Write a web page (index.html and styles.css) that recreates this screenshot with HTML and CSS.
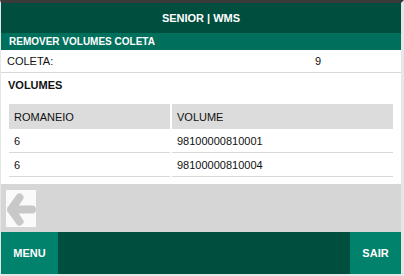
FILE: index.html
```html
<!DOCTYPE html>
<html lang="pt">
    <head>
        <meta charset="UTF-8" />
        <meta name="viewport" content="width=device-width, initial-scale=1.0" />
        <title>Senior | WMS</title>
        <link rel="stylesheet" href="styles.css">
    </head>
    <body>
        <div class="page">
            <!-- cabeçalho -->
            <div class="header">SENIOR | WMS</div>
            <div class="subheader">REMOVER VOLUMES COLETA</div>

            <div class="content">
                <div class="field">
                    <span class="field-label">COLETA:</span>
                    <span class="field-value">9</span>
                </div>

                <div class="volumes">
                    <div class="volumes-title">VOLUMES</div>
                    <table class="grid">
                        <thead>
                            <tr>
                                <th class="col-romaneio">ROMANEIO</th>
                                <th>VOLUME</th>
                            </tr>
                        </thead>
                        <tbody>
                            <tr>
                                <td>6</td>
                                <td>98100000810001</td>
                            </tr>
                            <tr>
                                <td>6</td>
                                <td>98100000810004</td>
                            </tr>
                        </tbody>
                    </table>
                </div>
            </div>

            <!-- barra de ações -->
            <div class="actions">
                <button class="back" title="Voltar">
                    <svg width="30" height="37" viewBox="0 0 30 37">
                        <path d="M13.5 7.5 L5 19.5 L13.5 31.5 M5 19.5 H26" fill="none" stroke="#c8c8c8" stroke-width="8" stroke-linecap="round" stroke-linejoin="round" />
                    </svg>
                </button>
            </div>

            <!-- rodapé -->
            <div class="footer">
                <button class="footer-btn menu">MENU</button>
                <button class="footer-btn sair">SAIR</button>
            </div>
        </div>
    </body>
</html>
```

FILE: styles.css
```css
* {
    box-sizing: border-box;
}

body {
    margin: 0;
    padding: 0;
    background-color: #e6e6e6;
    font-family: "Liberation Sans", Arial, sans-serif;
    color: #111;
}

.page {
    display: flex;
    flex-direction: column;
    height: 276px;
    border-top: 3px solid #3a3a3a;
    border-left: 1px solid #e6e6e6;
    border-right: 3px solid #e6e6e6;
    border-bottom: 2px solid #e6e6e6;
}

.header {
    height: 30px;
    background-color: #004e3d;
    color: #fff;
    font-size: 11px;
    font-weight: bold;
    display: flex;
    justify-content: center;
    align-items: center;
}

.subheader {
    height: 17px;
    line-height: 17px;
    padding-left: 8px;
    background-color: #006f5c;
    color: #fff;
    font-size: 10px;
    font-weight: bold;
}

.content {
    flex: 1;
    background-color: #fff;
}

.field {
    display: grid;
    grid-template-columns: 308px 1fr;
    align-items: center;
    height: 23px;
    padding-left: 6px;
    font-size: 11px;
    border-bottom: 1px solid #d8d8d8;
}

.volumes {
    padding: 6px 7px 0 7px;
}

.volumes-title {
    font-size: 11px;
    font-weight: bold;
    line-height: 13px;
}

.grid {
    margin-top: 12px;
    margin-left: -1px;
    width: calc(100% + 2px);
    border-collapse: separate;
    border-spacing: 2px 0;
    font-size: 11px;
}

.grid th {
    height: 25px;
    padding: 0 5px;
    text-align: left;
    font-weight: normal;
    background-color: #dcdcdc;
}

.grid .col-romaneio {
    width: 161px;
}

.grid td {
    height: 24px;
    padding: 0 5px;
    border-bottom: 1px solid #d8d8d8;
}

.actions {
    height: 48px;
    padding: 6px 5px;
    background-color: #d6d6d6;
}

.back {
    display: block;
    width: 30px;
    height: 37px;
    padding: 0;
    border: none;
    background-color: #fafafa;
    cursor: pointer;
}

.back svg {
    display: block;
}

.footer {
    display: flex;
    justify-content: space-between;
    height: 42px;
    background-color: #004e3d;
}

.footer-btn {
    border: none;
    padding: 0;
    background-color: #00826c;
    color: #fff;
    font-family: "Liberation Sans", Arial, sans-serif;
    font-size: 11px;
    font-weight: bold;
    cursor: pointer;
}

.footer-btn.menu {
    width: 57px;
}

.footer-btn.sair {
    width: 51px;
}
```
